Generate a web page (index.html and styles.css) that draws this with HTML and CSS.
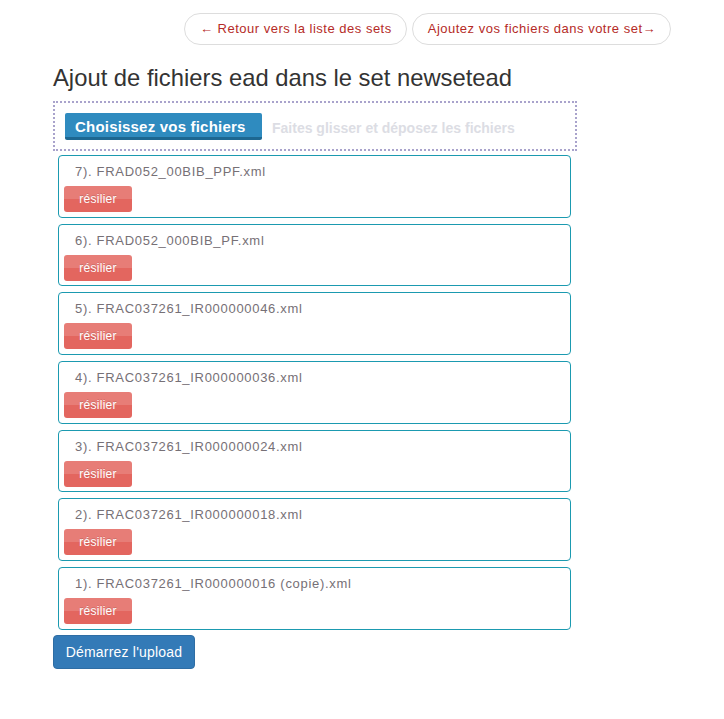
FILE: index.html
```html
<!DOCTYPE html>
<html lang="fr">
<head>
<meta charset="utf-8">
<link rel="stylesheet" href="styles.css">
</head>
<body>
<div class="page">
  <div class="top-links">
    <a class="pill" href="#">← Retour vers la liste des sets</a>
    <a class="pill" href="#">Ajoutez vos fichiers dans votre set→</a>
  </div>
  <h1 class="title">Ajout de fichiers ead dans le set newsetead</h1>
  <div class="dropzone">
    <span class="choose">Choisissez vos fichiers</span>
    <span class="drop-hint">Faites glisser et déposez les fichiers</span>
  </div>
  <div class="files">
    <div class="file"><div class="fname">7). FRAD052_00BIB_PPF.xml</div><span class="cancel">résilier</span></div>
    <div class="file"><div class="fname">6). FRAD052_000BIB_PF.xml</div><span class="cancel">résilier</span></div>
    <div class="file"><div class="fname">5). FRAC037261_IR000000046.xml</div><span class="cancel">résilier</span></div>
    <div class="file"><div class="fname">4). FRAC037261_IR000000036.xml</div><span class="cancel">résilier</span></div>
    <div class="file"><div class="fname">3). FRAC037261_IR000000024.xml</div><span class="cancel">résilier</span></div>
    <div class="file"><div class="fname">2). FRAC037261_IR000000018.xml</div><span class="cancel">résilier</span></div>
    <div class="file"><div class="fname">1). FRAC037261_IR000000016 (copie).xml</div><span class="cancel">résilier</span></div>
  </div>
  <span class="upload">Démarrez l'upload</span>
</div>
</body>
</html>
```
FILE: styles.css
```css
html, body {
  margin: 0;
  padding: 0;
  background: #fff;
}
body {
  font-family: "Liberation Sans", Arial, sans-serif;
  color: #333;
}
.page {
  width: 618px;
  margin-left: 53px;
  padding-top: 13px;
}
.top-links {
  display: flex;
  justify-content: flex-end;
  gap: 5px;
}
.pill {
  display: inline-block;
  box-sizing: border-box;
  height: 32px;
  line-height: 30px;
  padding: 0 14px 0 15px;
  border: 1px solid #ddd;
  border-radius: 16px;
  font-size: 13px;
  letter-spacing: 0.5px;
  color: #b52b27;
  text-decoration: none;
  background: #fff;
}
.title {
  margin: 19px 0 9px 0;
  font-size: 23.8px;
  font-weight: normal;
  line-height: 28px;
  color: #333;
}
.dropzone {
  box-sizing: border-box;
  width: 524px;
  height: 50px;
  border: 2px dotted #a9a3cc;
  padding: 10px 0 0 10px;
  display: flex;
  align-items: flex-start;
  gap: 10px;
}
.choose {
  display: inline-block;
  box-sizing: border-box;
  width: 197px;
  height: 27px;
  line-height: 27px;
  padding-left: 10px;
  background: #2f8bbf;
  border-bottom: 3px solid #1d6791;
  border-radius: 2px;
  color: #fff;
  font-weight: bold;
  font-size: 15px;
  letter-spacing: 0.2px;
}
.drop-hint {
  line-height: 30px;
  font-size: 14px;
  font-weight: bold;
  color: #dcdde4;
}
.files {
  display: flex;
  flex-direction: column;
  gap: 6px;
  margin: 4px 0 0 5px;
}
.file {
  box-sizing: border-box;
  width: 513px;
  height: 62.7px;
  border: 1px solid #1b9ab0;
  border-radius: 4px;
  padding: 8px 0 0 5px;
}
.fname {
  font-size: 13px;
  letter-spacing: 0.7px;
  color: #767076;
  padding-left: 11px;
  line-height: 16px;
  margin-bottom: 6px;
}
.cancel {
  display: inline-block;
  box-sizing: border-box;
  width: 68px;
  height: 26px;
  line-height: 26px;
  text-align: center;
  font-size: 12px;
  letter-spacing: 0.3px;
  color: #fff;
  border-radius: 3px;
  background: linear-gradient(#e77d77 0%, #e77d77 50%, #e3665f 50%, #e3665f 100%);
  text-shadow: 0 -1px 0 rgba(0,0,0,0.15);
}
.upload {
  display: inline-block;
  box-sizing: border-box;
  margin-top: 5px;
  width: 142px;
  height: 34px;
  line-height: 32px;
  text-align: center;
  font-size: 14px;
  letter-spacing: 0.2px;
  color: #fff;
  background: #337ab7;
  border: 1px solid #2e6da4;
  border-radius: 4px;
}
```
